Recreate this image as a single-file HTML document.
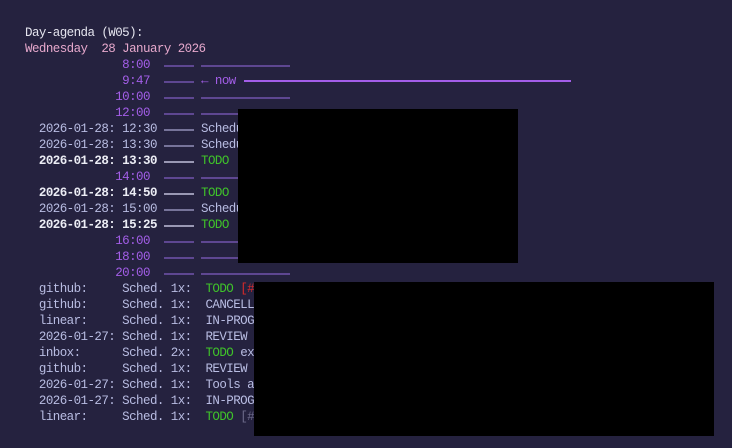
<!DOCTYPE html>
<html><head><meta charset="utf-8"><style>
html,body{margin:0;padding:0;background:#25223f;width:732px;height:448px;overflow:hidden}
body{position:relative;font-family:"Liberation Mono",monospace;font-size:12.5px;letter-spacing:-0.56px;color:#b9bde3}
.r{position:absolute;left:25px;white-space:pre;line-height:16px;height:16px;margin-top:1px}
.t{position:absolute;left:201px;white-space:pre;line-height:16px;height:16px;margin-top:1px}
.p{color:#a35ee8}.w{color:#ecedf5;font-weight:bold}.g{color:#3fc32a}.pk{color:#e6a8cc}.red{color:#d82a2a}.dim{color:#6c6a8a}
.l{position:absolute;height:2px;background:#5e4791}
.lw{position:absolute;height:2px;background:#77749a}
.blk{position:absolute;background:#000}
</style></head><body>
<div class="r" style="top:24px;color:#e4e4ee">Day-agenda (W05):</div>
<div class="r pk" style="top:40px">Wednesday  28 January 2026</div>
<div class="r p" style="top:56px">              8:00</div>
<div class="r p" style="top:72px">              9:47</div><div class="t p" style="top:72px">← now</div>
<div class="r p" style="top:88px">             10:00</div>
<div class="r p" style="top:104px">             12:00</div>
<div class="r" style="top:120px">  2026-01-28: 12:30</div><div class="t" style="top:120px">Schedu</div>
<div class="r" style="top:136px">  2026-01-28: 13:30</div><div class="t" style="top:136px">Schedu</div>
<div class="r w" style="top:152px">  2026-01-28: 13:30</div><div class="t g" style="top:152px">TODO</div>
<div class="r p" style="top:168px">             14:00</div>
<div class="r w" style="top:184px">  2026-01-28: 14:50</div><div class="t g" style="top:184px">TODO</div>
<div class="r" style="top:200px">  2026-01-28: 15:00</div><div class="t" style="top:200px">Schedu</div>
<div class="r w" style="top:216px">  2026-01-28: 15:25</div><div class="t g" style="top:216px">TODO</div>
<div class="r p" style="top:232px">             16:00</div>
<div class="r p" style="top:248px">             18:00</div>
<div class="r p" style="top:264px">             20:00</div>
<div class="r" style="top:280px">  github:     Sched. 1x:  <span class="g">TODO</span> <span class="red">[#</span></div>
<div class="r" style="top:296px">  github:     Sched. 1x:  CANCELL</div>
<div class="r" style="top:312px">  linear:     Sched. 1x:  IN-PROG</div>
<div class="r" style="top:328px">  2026-01-27: Sched. 1x:  REVIEW</div>
<div class="r" style="top:344px">  inbox:      Sched. 2x:  <span class="g">TODO</span> ex</div>
<div class="r" style="top:360px">  github:     Sched. 1x:  REVIEW</div>
<div class="r" style="top:376px">  2026-01-27: Sched. 1x:  Tools a</div>
<div class="r" style="top:392px">  2026-01-27: Sched. 1x:  IN-PROG</div>
<div class="r" style="top:408px">  linear:     Sched. 1x:  <span class="g">TODO</span> <span class="dim">[#</span></div>

<div class="l" style="left:164px;top:65px;width:30px"></div><div class="l" style="left:201px;top:65px;width:89px"></div>
<div class="l" style="left:164px;top:81px;width:30px"></div><div style="position:absolute;left:244px;top:80px;width:327px;height:2px;background:#a35ee8"></div>
<div class="l" style="left:164px;top:97px;width:30px"></div><div class="l" style="left:201px;top:97px;width:89px"></div>
<div class="l" style="left:164px;top:113px;width:30px"></div><div class="l" style="left:201px;top:113px;width:89px"></div>
<div class="lw" style="left:164px;top:129px;width:30px"></div>
<div class="lw" style="left:164px;top:145px;width:30px"></div>
<div class="lw" style="left:164px;top:161px;width:30px;background:#9a98b4"></div>
<div class="l" style="left:164px;top:177px;width:30px"></div><div class="l" style="left:201px;top:177px;width:89px"></div>
<div class="lw" style="left:164px;top:193px;width:30px;background:#9a98b4"></div>
<div class="lw" style="left:164px;top:209px;width:30px"></div>
<div class="lw" style="left:164px;top:225px;width:30px;background:#9a98b4"></div>
<div class="l" style="left:164px;top:241px;width:30px"></div><div class="l" style="left:201px;top:241px;width:89px"></div>
<div class="l" style="left:164px;top:257px;width:30px"></div><div class="l" style="left:201px;top:257px;width:89px"></div>
<div class="l" style="left:164px;top:273px;width:30px"></div><div class="l" style="left:201px;top:273px;width:89px"></div>

<div class="blk" style="left:238px;top:109px;width:280px;height:154px"></div>
<div class="blk" style="left:254px;top:282px;width:460px;height:154px"></div>
</body></html>
